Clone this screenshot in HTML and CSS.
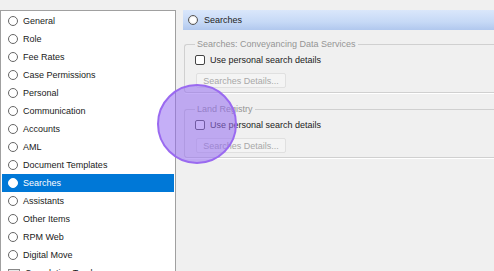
FILE: index.html
```html
<!DOCTYPE html>
<html>
<head>
    <title>Options - Searches</title>
    <link rel="stylesheet" href="styles.css">
</head>
<body>
    <div class="window">
        <ul class="nav-list">
            <li class="nav-item"><span class="radio"></span>General</li>
            <li class="nav-item"><span class="radio"></span>Role</li>
            <li class="nav-item"><span class="radio"></span>Fee Rates</li>
            <li class="nav-item"><span class="radio"></span>Case Permissions</li>
            <li class="nav-item"><span class="radio"></span>Personal</li>
            <li class="nav-item"><span class="radio"></span>Communication</li>
            <li class="nav-item"><span class="radio"></span>Accounts</li>
            <li class="nav-item"><span class="radio"></span>AML</li>
            <li class="nav-item"><span class="radio"></span>Document Templates</li>
            <li class="nav-item selected"><span class="radio"></span>Searches</li>
            <li class="nav-item"><span class="radio"></span>Assistants</li>
            <li class="nav-item"><span class="radio"></span>Other Items</li>
            <li class="nav-item"><span class="radio"></span>RPM Web</li>
            <li class="nav-item"><span class="radio"></span>Digital Move</li>
            <li class="nav-item"><span class="box-icon"></span>Completion Tracker</li>
        </ul>

        <div class="content">
            <div class="page-header"><span class="radio"></span>Searches</div>

            <fieldset class="group">
                <legend>Searches: Conveyancing Data Services</legend>
                <label class="check-row"><span class="checkbox"></span>Use personal search details</label>
                <button class="details-btn" disabled>Searches Details...</button>
            </fieldset>

            <fieldset class="group">
                <legend>Land Registry</legend>
                <label class="check-row"><span class="checkbox"></span>Use personal search details</label>
                <button class="details-btn" disabled>Searches Details...</button>
            </fieldset>
        </div>
    </div>

    <!-- click highlight from the recording -->
    <div class="click-marker"></div>
</body>
</html>
```

FILE: styles.css
```css
body {
    margin: 0;
    background-color: #f0f0f0;
    font-family: "Liberation Sans", Arial, sans-serif;
    font-size: 9px;
    color: #1a1a1a;
    overflow: hidden;
}

.window {
    display: flex;
    padding-top: 10px;
    height: 261px;
}

/* Left navigation list */
.nav-list {
    list-style: none;
    margin: 0;
    padding: 1px 1px 0 1px;
    width: 172px;
    background-color: #fff;
    border: 1px solid #a0a0a0;
    border-bottom: none;
    overflow: hidden;
}

.nav-item {
    display: flex;
    align-items: center;
    height: 18px;
    padding-left: 6px;
    white-space: nowrap;
}

.nav-item.selected {
    background-color: #0078d7;
    color: #fff;
}

.radio {
    width: 8px;
    height: 8px;
    border: 1px solid #666;
    border-radius: 50%;
    background-color: #fff;
    margin-right: 5px;
    flex-shrink: 0;
}

.nav-item.selected .radio {
    border-color: #fff;
}

.box-icon {
    width: 10px;
    height: 6px;
    border: 1px solid #888;
    background-color: #e8e8e8;
    margin-right: 5px;
}

/* Right side */
.content {
    flex: 1;
    margin-left: 7px;
}

.page-header {
    display: flex;
    align-items: center;
    height: 20px;
    padding-left: 5px;
    background: linear-gradient(#dae7fb, #c6d9f6 60%, #b1c8ee);
    color: #222;
}

.page-header .radio {
    border-color: #555;
    box-shadow: inset 0 0 0 1px #e8e8e8;
    margin-right: 6px;
}

.group {
    margin: 9px 0 0 1px;
    padding: 4px 0 4px 10px;
    border: 1px solid #d0d0d0;
    border-right: none;
    border-radius: 3px 0 0 3px;
    box-shadow: 0 1px 0 #fff;
}

.group + .group {
    margin-top: 11px;
}

.group legend {
    padding: 0 2px;
    margin-left: 0;
    color: #959595;
}

.check-row {
    display: flex;
    align-items: center;
    height: 14px;
    color: #222;
}

.checkbox {
    width: 8px;
    height: 8px;
    border: 1px solid #444;
    border-radius: 2px;
    background-color: #fff;
    margin-right: 5px;
}

.details-btn {
    display: block;
    width: 90px;
    height: 15px;
    margin: 6px 0 0 1px;
    padding: 0;
    font-family: inherit;
    font-size: 9px;
    color: #a8a8a8;
    background-color: #f4f4f4;
    border: 1px solid #e0e0e0;
    border-radius: 2px;
}

.click-marker {
    position: absolute;
    left: 157px;
    top: 84px;
    width: 76px;
    height: 76px;
    border: 2px solid #9a6af0;
    border-radius: 50%;
    background-color: rgba(150, 110, 240, 0.55);
}
```
